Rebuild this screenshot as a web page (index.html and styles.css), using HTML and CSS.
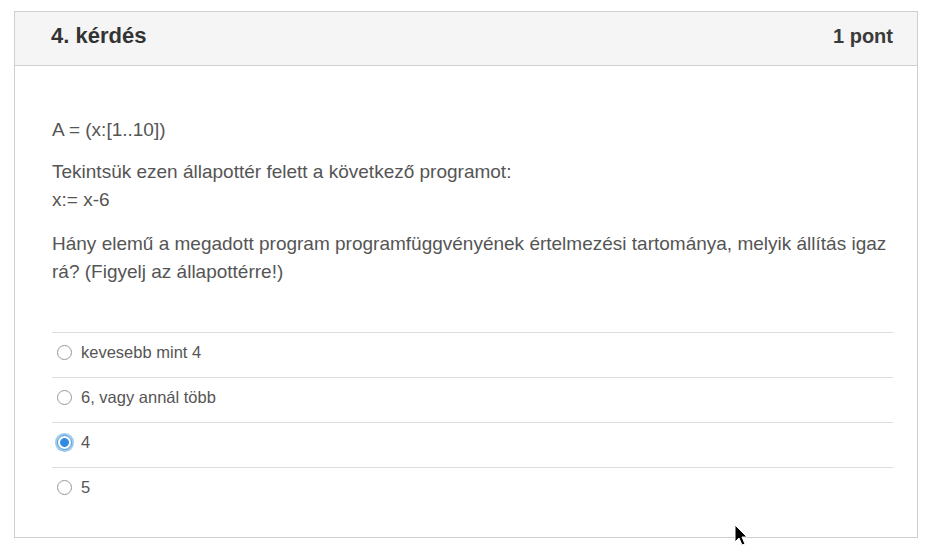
FILE: index.html
```html
<!DOCTYPE html>
<html lang="hu">
<head>
<meta charset="utf-8">
<title>4. kérdés</title>
<link rel="stylesheet" href="styles.css">
</head>
<body>
<div class="card">
  <div class="card-head">
    <h2 class="q-title">4. kérdés</h2>
    <span class="q-points">1 pont</span>
  </div>
  <div class="card-body">
    <p class="line first">A = (x:[1..10])</p>
    <p class="line second">Tekintsük ezen állapottér felett a következő programot:<br>x:= x-6</p>
    <p class="line">Hány elemű a megadott program programfüggvényének értelmezési tartománya, melyik állítás igaz rá? (Figyelj az állapottérre!)</p>
    <ul class="options">
      <li class="opt"><span class="radio"></span>kevesebb mint 4</li>
      <li class="opt"><span class="radio"></span>6, vagy annál több</li>
      <li class="opt"><span class="radio checked"></span>4</li>
      <li class="opt"><span class="radio"></span>5</li>
    </ul>
  </div>
</div>
<svg class="cursor" width="16" height="24" viewBox="0 0 16 24"><path d="M1 1 L1 18 L5 14 L8 21 L11 20 L8 13 L13 13 Z" fill="#000" stroke="#fff" stroke-width="1"/></svg>
</body>
</html>
```
FILE: styles.css
```css
html, body { margin: 0; padding: 0; background: #fff; }
body {
  font-family: "Liberation Sans", Arial, sans-serif;
  color: #333;
  position: relative;
  width: 932px;
  height: 552px;
  overflow: hidden;
  padding-top: 11px;
  box-sizing: border-box;
}
.card {
  margin-left: 14px;
  width: 904px;
  height: 527px;
  box-sizing: border-box;
  border: 1px solid #cfcfcf;
  background: #fff;
}
.card-head {
  height: 54px;
  box-sizing: border-box;
  background: #f5f5f5;
  border-bottom: 1px solid #d0d0d0;
  display: flex;
  align-items: center;
  justify-content: space-between;
  padding: 0 24px 5px 36px;
}
.q-title {
  margin: 0;
  font-size: 22px;
  font-weight: bold;
  color: #333;
}
.q-points {
  font-size: 20px;
  font-weight: bold;
  color: #3a3a3a;
}
.card-body {
  padding: 0 24px 0 37px;
}
.line {
  margin: 0;
  font-size: 19px;
  line-height: 28px;
  color: #555;
}
.line.first { margin-top: 50px; margin-bottom: 14px; }
.line.second { margin-bottom: 16px; }
.options {
  list-style: none;
  margin: 46px 0 0 0;
  padding: 0;
}
.opt {
  display: flex;
  align-items: center;
  gap: 9px;
  height: 45px;
  box-sizing: border-box;
  border-top: 1px solid #ddd;
  font-size: 16.5px;
  color: #555;
  padding: 0 0 6px 5px;
}
.radio {
  width: 15px;
  height: 15px;
  border-radius: 50%;
  border: 1px solid #999;
  box-sizing: border-box;
  background: #fff;
  flex: none;
}
.radio.checked {
  border: 1px solid #3a8fd6;
  background: radial-gradient(circle, #2f8ce0 0 4px, #fff 4.8px);
  box-shadow: 0 0 0 2px #9cc8ee;
}
.cursor {
  position: absolute;
  left: 734px;
  top: 524px;
}
```
